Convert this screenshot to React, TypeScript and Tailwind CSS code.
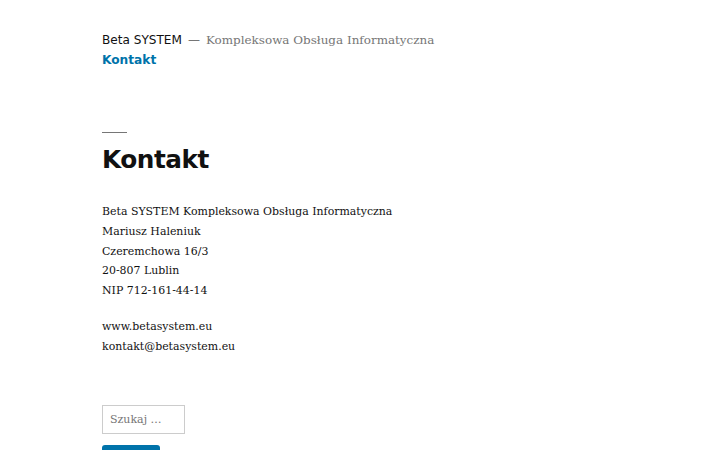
import React from "react";

export default function App() {
  return (
    <div className="w-[720px] h-[450px] overflow-hidden bg-white text-[#111111]">
      <div className="pl-[102px] pr-[102px]">
        <header className="pt-[31px]">
          <div className="flex items-baseline leading-[18px]">
            <span className="text-[12.1px] text-[#111111]" style={{ fontFamily: '"DejaVu Sans", sans-serif' }}>
              Beta SYSTEM
            </span>
            <span className="text-[12px] text-[#767676] mx-[6px]" style={{ fontFamily: '"DejaVu Sans", sans-serif' }}>
              —
            </span>
            <span className="text-[11.95px] text-[#767676]" style={{ fontFamily: '"DejaVu Serif", serif' }}>
              Kompleksowa Obsługa Informatyczna
            </span>
          </div>
          <nav className="leading-[18px]">
            <a className="text-[12.2px] font-bold text-[#0073aa]" style={{ fontFamily: '"DejaVu Sans", sans-serif' }}>
              Kontakt
            </a>
          </nav>
        </header>
        <main className="pt-[63px]">
          <div className="w-[25px] h-px bg-[#767676]" />
          <h1
            className="mt-[12px] text-[24.75px] font-bold leading-[30px] tracking-[-0.02em]"
            style={{ fontFamily: '"DejaVu Sans", sans-serif' }}
          >
            Kontakt
          </h1>
          <div className="mt-[27px] text-[10.95px] leading-[19.8px]" style={{ fontFamily: '"DejaVu Serif", serif' }}>
            <p>
              Beta SYSTEM Kompleksowa Obsługa Informatyczna
              <br />
              Mariusz Haleniuk
              <br />
              Czeremchowa 16/3
              <br />
              20-807 Lublin
              <br />
              NIP 712-161-44-14
            </p>
            <p className="mt-[16px]">
              www.betasystem.eu
              <br />
              kontakt@betasystem.eu
            </p>
          </div>
          <form className="mt-[48px]">
            <input
              placeholder="Szukaj …"
              className="block w-[83px] h-[29px] border border-[#cccccc] px-[7px] text-[11px] text-[#111] placeholder:text-[#767676] outline-none"
              style={{ fontFamily: '"DejaVu Serif", serif' }}
            />
            <button className="block mt-[11px] w-[58px] h-[30px] bg-[#0073aa] rounded-[3px]" />
          </form>
        </main>
      </div>
    </div>
  );
}
